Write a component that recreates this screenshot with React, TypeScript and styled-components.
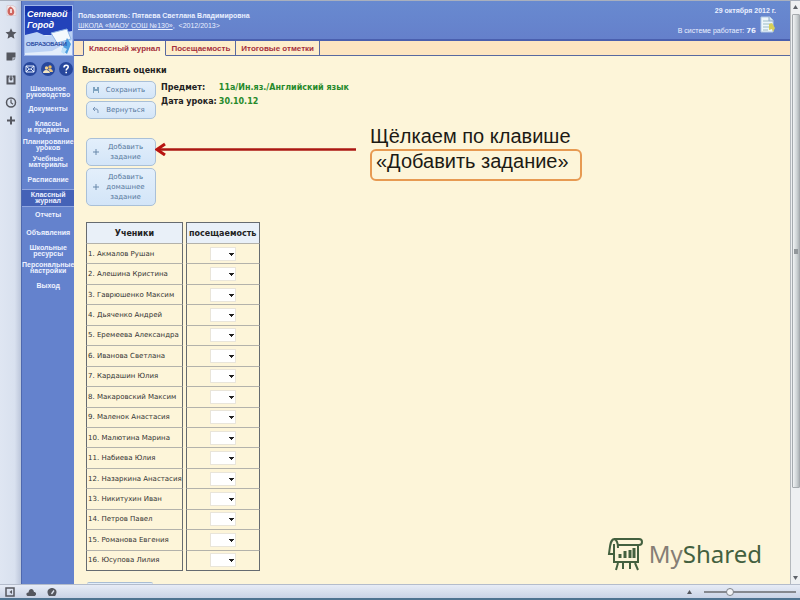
import React from "react";
import styled, { createGlobalStyle, css } from "styled-components";

const verdana = `"DejaVu Sans", Verdana, sans-serif`;
const arial = `"Liberation Sans", Arial, sans-serif`;

const GlobalStyle = createGlobalStyle`
  *, *::before, *::after { box-sizing: border-box; }
  body { margin: 0; font-family: ${arial}; background: #fdf5d9; }
  button, select { font: inherit; }
`;

const Screen = styled.div`
  display: flex;
  flex-direction: column;
  min-height: 100vh;
  border-top: 1px solid #a9b0bd;
`;

const Workspace = styled.div`
  display: grid;
  grid-template-columns: 21px 53px minmax(0, 1fr) 10px;
  flex: 1;
`;

const ToolRail = styled.aside`
  display: flex;
  flex-direction: column;
  align-items: center;
  gap: 10px;
  padding-top: 3px;
  background: linear-gradient(90deg, #dfe6f2, #d9e1ef 70%, #bcc6da);
`;

const IconButton = styled.button`
  display: flex;
  align-items: center;
  justify-content: center;
  padding: 0;
  border: 0;
  background: none;
  color: #55575f;
`;

const RailButton = styled(IconButton)`
  &:last-child { margin-top: -5px; }
`;

const Sidebar = styled.nav`
  display: flex;
  flex-direction: column;
  align-items: center;
  padding-top: 4px;
  background: #6482cd;
  border-left: 1px solid #4e68ae;
`;

const LogoLink = styled.a`
  display: block;
  height: 51px;
`;

const QuickRow = styled.div`
  display: flex;
  gap: 4px;
  margin: 6px 0 7px;
`;

const RoundButton = styled(IconButton)`
  width: 14px;
  height: 14px;
  border-radius: 50%;
  background: #27479c;
  color: #fff;
`;

const NavList = styled.ul`
  display: grid;
  grid-auto-rows: 1fr;
  width: 100%;
  height: 212px;
  margin: 0;
  padding: 0;
  list-style: none;
`;

const NavLink = styled.a<{ $active?: boolean }>`
  display: flex;
  align-items: center;
  justify-content: center;
  height: 100%;
  padding-right: 2px;
  color: #eef2ff;
  font-size: 7px;
  font-weight: bold;
  line-height: 6px;
  text-align: center;
  text-decoration: none;
  white-space: pre;
  ${(p) =>
    p.$active &&
    css`
      background: #4562b7;
      border: solid #90a6e0;
      border-width: 1px 0;
    `}
`;

const Page = styled.div`
  display: flex;
  flex-direction: column;
  min-width: 0;
  background: #fdf5d9;
`;

const Header = styled.header`
  display: flex;
  justify-content: space-between;
  height: 40px;
  padding: 5px 14px 0 4px;
  background: linear-gradient(#688ad0, #6580cb);
  border-bottom: 2px solid #4a5fae;
  color: #eaf0ff;
  font-size: 7px;
  line-height: 10px;
`;

const UserInfo = styled.div`
  padding-top: 5px;
  white-space: nowrap;

  a { color: inherit; }
`;

const UserName = styled.div`
  font-weight: bold;
`;

const Session = styled.div`
  display: grid;
  grid-template-columns: auto 16px;
  column-gap: 4px;
  align-content: start;
  text-align: right;
`;

const SessionDate = styled.div`
  grid-column: 1 / -1;
  font-weight: bold;
`;

const Online = styled.div`
  padding-top: 10px;

  b { font: bold 7px ${verdana}; }
`;

const Tabs = styled.div`
  display: flex;
  height: 15px;
  padding-left: 9px;
  background: linear-gradient(#5869a0, #5869a0) bottom / 100% 1px no-repeat #fde5c0;
`;

const Tab = styled.button<{ $active?: boolean }>`
  padding: 0 5px;
  border: solid #5869a0;
  border-width: 0 1px 1px 0;
  background: #fdedcb;
  color: #a5303d;
  font-size: 8px;
  font-weight: bold;
  line-height: 13px;
  white-space: nowrap;
  ${(p) =>
    p.$active &&
    css`
      border-left-width: 1px;
      border-bottom-color: #fdf5d9;
      background: #fdf5d9;
    `}
`;

const Main = styled.main`
  position: relative;
  flex: 1;
  padding: 10px 8px 0;
  font-family: ${verdana};
`;

const Title = styled.h1`
  margin: 0 0 5px;
  color: #222;
  font-size: 8px;
  line-height: 10px;
`;

const LessonRow = styled.div`
  display: flex;
  align-items: flex-start;
  gap: 5px;
  padding-left: 4px;
`;

const ButtonColumn = styled.div`
  display: flex;
  flex-direction: column;
  gap: 2px;
  width: 70px;
`;

const TaskColumn = styled(ButtonColumn)`
  margin: 19px 0 16px 4px;
`;

const ActionButton = styled.button`
  display: grid;
  grid-template-columns: 8px 1fr;
  align-items: center;
  gap: 2px;
  min-height: 18px;
  padding: 3px 6px 3px 5px;
  border: 1px solid #a9c0d8;
  border-radius: 5px;
  background: linear-gradient(#e3effb, #d3e5f8);
  color: #56789d;
  font-family: ${verdana};
  font-size: 7px;
  line-height: 10px;
`;

const Details = styled.dl`
  display: grid;
  grid-template-columns: auto auto;
  column-gap: 2px;
  margin: 0;
  font-size: 8px;
  font-weight: bold;
  line-height: 14px;

  dt { color: #222; }
  dd { margin: 0; color: #268a2b; }
`;

const Roster = styled.table`
  height: 349px;
  margin-left: 1px;
  border-collapse: separate;
  border-spacing: 3px 0;
  color: #333;
  font-size: 7px;

  th, td {
    padding: 0;
    border: solid #666b70;
    border-width: 0 1px;
    border-bottom: 1px solid #b3b2ab;
  }
  th {
    height: 22px;
    border-top-width: 1px;
    background: #e9f0f8;
    color: #222;
    font-size: 8px;
  }
  th:last-child { min-width: 74px; }
  td:first-child {
    padding-left: 1px;
    white-space: nowrap;
  }
  td:last-child {
    text-align: center;
  }
  tbody tr:last-child td {
    border-bottom-color: #666b70;
  }
`;

const MarkSelect = styled.select`
  appearance: none;
  display: block;
  width: 26px;
  height: 14px;
  margin: 0 auto;
  border: 1px solid #e9e5da;
  border-radius: 0;
  background: linear-gradient(#222, #222) 18px 5px / 5px 1px no-repeat,
    linear-gradient(#222, #222) 19px 6px / 3px 1px no-repeat,
    linear-gradient(#222, #222) 20px 7px / 1px 1px no-repeat, #fff;
`;

const NextButtonEdge = styled.div`
  width: 66px;
  height: 2px;
  margin: 11px 0 0 5px;
  border-top: 1px solid #a9bdd3;
  border-radius: 3px 3px 0 0;
  background: #e3eefa;
`;

const Callout = styled.div`
  position: absolute;
  top: 67px;
  left: 81px;
  display: flex;
  align-items: flex-start;
  color: #1c1a14;
  font-family: ${arial};
  font-size: 20px;
  line-height: 26px;
  white-space: nowrap;

  svg { margin-top: 19px; }
  p { margin: 0 0 0 14px; }
`;

const Highlight = styled.span`
  display: block;
  width: 212px;
  height: 32px;
  padding-left: 4px;
  border: 2px solid #e79a52;
  border-radius: 6px;
  line-height: 20px;
`;

const Watermark = styled.div`
  position: absolute;
  right: 28px;
  bottom: 12px;
  display: flex;
  align-items: center;
  gap: 6px;
  color: #43603f;
  font-family: "Noto Sans", sans-serif;
  font-size: 24px;
  line-height: 36px;

  span span { color: #857d75; }
`;

const ScrollTrack = styled.div`
  display: flex;
  flex-direction: column;
  align-items: center;
  justify-content: space-between;
  padding: 4px 0;
  border-left: 1px solid #b5b9bd;
  background: #eef0f2;
  color: #5e6269;
`;

const ScrollThumb = styled.div`
  flex: 1;
  display: flex;
  align-items: center;
  justify-content: center;
  width: 8px;
  margin: 5px 0 88px;
  border: 1px solid #a6abaf;
  border-radius: 1px;
  background: linear-gradient(90deg, #f1f3f4, #cfd4d6 60%, #b1b7ba);
`;

const Grip = styled.span`
  width: 4px;
  height: 5px;
  background: #92979b;
`;

const StatusBar = styled.footer`
  display: flex;
  align-items: center;
  height: 14px;
  padding: 0 4px 0 5px;
  border-top: 1px solid #b4bccb;
  background: linear-gradient(#e7ecf6, #cad3e6);
`;

const StatusTools = styled.div`
  display: flex;
  gap: 11px;
  flex: 1;
`;

const Zoom = styled.input`
  appearance: none;
  width: 92px;
  height: 8px;
  margin: 0 0 0 12px;
  background: linear-gradient(#85888f, #85888f) center / 100% 2px no-repeat;

  &::-webkit-slider-thumb {
    appearance: none;
    width: 8px;
    height: 8px;
    border: 1px solid #7d8188;
    border-radius: 50%;
    background: #f3f4f7;
  }
`;

const Desktop = styled.div`
  height: 3px;
  background: #4f7391;
`;

const navItems = [
  "Школьное\nруководство", "Документы", "Классы\nи предметы", "Планирование\nуроков",
  "Учебные\nматериалы", "Расписание", "Классный\nжурнал", "Отчеты", "Объявления",
  "Школьные\nресурсы", "Персональные\nнастройки", "Выход",
];

const students = [
  "Акмалов Рушан", "Алешина Кристина", "Гаврюшенко Максим", "Дьяченко Андрей",
  "Еремеева Александра", "Иванова Светлана", "Кардашин Юлия", "Макаровский Максим",
  "Маленок Анастасия", "Малютина Марина", "Набиева Юлия", "Назаркина Анастасия",
  "Никитухин Иван", "Петров Павел", "Романова Евгения", "Юсупова Лилия",
];

const railTools = [
  { label: "Opera", art: <><path d="M2 1h6l3 2v8H2z" fill="#f3e9ea" stroke="#d3bcc2" strokeWidth=".6" /><path d="M5.500 2C1 4 2 11 6 11s5-6-.5-9z" fill="#cf655e" /><path d="M6 4.500v4" stroke="#fff" strokeWidth="1.500" /></> },
  { label: "Закладки", art: <path d="M6 .7l1.600 3.600 3.900.4-2.900 2.600.8 3.900L6 9.200l-3.400 2 .8-3.900L.5 4.700l3.900-.4z" fill="currentColor" /> },
  { label: "Заметки", art: <path d="M1.500 2h9v5h-3v3h-6zM8.500 8h2l-2 2z" fill="currentColor" /> },
  { label: "Загрузки", art: <><path d="M1.500 2h3v2h-1v5h5V4h-1V2h3v9h-9z" fill="currentColor" /><path d="M5.200 2h1.600v3H8L6 7.500 4 5h1.200z" fill="currentColor" /></> },
  { label: "История", art: <><circle cx="6" cy="6" r="4.500" fill="none" stroke="currentColor" strokeWidth="1.500" /><path d="M6 3v3.300l2 1.500" fill="none" stroke="currentColor" strokeWidth="1.200" /></> },
  { label: "Добавить панель", art: <path d="M6 2v8M2 6h8" stroke="currentColor" strokeWidth="2" /> },
];

const Brand = () => (
  <svg width="49" height="51" viewBox="0 0 49 51" role="img" aria-label="Сетевой Город Образование">
    <rect width="49" height="51" fill="#9fb6ea" />
    <rect x="1" y="1" width="47" height="29" fill="#2343ba" />
    <path d="M1 1h47v5L20 14 1 10z" fill="#1632a8" />
    <path d="M1 30h47v20H1z" fill="#e3edfb" />
    <path d="M1 30l12-3 9 4 26-5v9L28 46 1 48z" fill="#bcd2f5" />
    <path d="M27 28l16-4 4 10-14 4z" fill="#f4f9fd" stroke="#90b5e5" />
    <path d="M43 33l4 6-4 10-5-4z" fill="#4c9de0" />
    <path d="M39 42l4 2-3 5-3-2z" fill="#bde1fa" />
    <text x="3" y="12" fill="#fff" fontFamily="Liberation Sans" fontSize="9" fontWeight="bold" fontStyle="italic">Сетевой</text>
    <text x="3" y="23" fill="#fff" fontFamily="Liberation Sans" fontSize="9" fontWeight="bold" fontStyle="italic">Город</text>
    <text x="2" y="41" fill="#2849a1" stroke="#2849a1" strokeWidth=".2" fontFamily="Liberation Sans" fontSize="6">ОБРАЗОВАНИ</text>
  </svg>
);

const Plus = () => (
  <svg width="8" height="8" viewBox="0 0 8 8"><path d="M4 1v6M1 4h6" stroke="#6888aa" /></svg>
);

export default function App() {
  return (
    <>
      <GlobalStyle />
      <Screen>
        <Workspace>
          <ToolRail>
            {railTools.map((t) => (
              <RailButton key={t.label} aria-label={t.label}>
                <svg width="12" height="13" viewBox="0 0 12 12">{t.art}</svg>
              </RailButton>
            ))}
          </ToolRail>

          <Sidebar>
            <LogoLink href="#"><Brand /></LogoLink>
            <QuickRow>
              <RoundButton aria-label="Почта">
                <svg width="10" height="8" viewBox="0 0 10 8"><path d="M1 1h8v6H1zM1 1l4 3.500L9 1M1 7l3-3M9 7L6 4" fill="none" stroke="#e8f0ff" /></svg>
              </RoundButton>
              <RoundButton aria-label="Пользователи">
                <svg width="10" height="8" viewBox="0 0 10 8"><circle cx="3.500" cy="3" r="1.700" fill="#f3d28b" /><path d="M0 8c0-4 6-4 7 0z" fill="#f3e6c1" /><circle cx="7" cy="2" r="1.700" fill="#e9b95f" /><path d="M5 4c2-1 5 0 5 3H7z" fill="#e7c481" /></svg>
              </RoundButton>
              <RoundButton aria-label="Справка">
                <svg width="10" height="10" viewBox="0 0 10 10"><path d="M3 3.500C3 .5 7.500.5 7.200 3.200 7 4.800 5.200 4.600 5.200 6.500M5.200 7.700v1.500" fill="none" stroke="#fff" strokeWidth="1.600" /></svg>
              </RoundButton>
            </QuickRow>
            <NavList>
              {navItems.map((item, i) => (
                <li key={item}><NavLink href="#" $active={i === 6}>{item}</NavLink></li>
              ))}
            </NavList>
          </Sidebar>

          <Page>
            <Header>
              <UserInfo>
                <UserName>Пользователь: Пятаева Светлана Владимировна</UserName>
                <a href="#">ШКОЛА «МАОУ СОШ №130»</a>,&nbsp; &lt;2012/2013&gt;
              </UserInfo>
              <Session>
                <SessionDate>29 октября 2012 г.</SessionDate>
                <Online>В системе работает: <b>76</b></Online>
                <svg width="16" height="18" viewBox="0 0 16 18">
                  <path d="M1 1h9l3 3v12H1z" fill="#eef6fb" stroke="#b4cbe4" />
                  <path d="M3 5h6M3 8h8M3 11h7M3 14h5" stroke="#9bbcc6" />
                  <path d="M9 1v4h4" fill="#cfe0ee" stroke="#91abc8" />
                  <path d="M9 8l3-1 3 5-2 4-1-3-3 1z" fill="#d7cf59" />
                </svg>
              </Session>
            </Header>
            <Tabs role="tablist">
              <Tab role="tab" aria-selected="true" $active>Классный журнал</Tab>
              <Tab role="tab" aria-selected="false">Посещаемость</Tab>
              <Tab role="tab" aria-selected="false">Итоговые отметки</Tab>
            </Tabs>
            <Main>
              <Title>Выставить оценки</Title>
              <LessonRow>
                <ButtonColumn>
                  <ActionButton>
                    <svg width="8" height="8" viewBox="0 0 8 8"><path d="M1 1h6v6H1z" fill="#7ea3c0" /><path d="M3 1h2v2H3zM2 5h4v2H2z" fill="#dcebf7" /></svg>
                    Сохранить
                  </ActionButton>
                  <ActionButton>
                    <svg width="8" height="8" viewBox="0 0 8 8"><path d="M3 1L1 3l2 2M1 3h3c2 0 2 1 2 4" fill="none" stroke="#7793b5" /></svg>
                    Вернуться
                  </ActionButton>
                </ButtonColumn>
                <Details>
                  <dt>Предмет:</dt><dd>11а/Ин.яз./Английский язык</dd>
                  <dt>Дата урока:</dt><dd>30.10.12</dd>
                </Details>
              </LessonRow>
              <TaskColumn>
                <ActionButton><Plus />Добавить задание</ActionButton>
                <ActionButton><Plus />Добавить домашнее задание</ActionButton>
              </TaskColumn>
              <Roster>
                <thead>
                  <tr><th scope="col">Ученики</th><th scope="col">посещаемость</th></tr>
                </thead>
                <tbody>
                  {students.map((name, i) => (
                    <tr key={name}>
                      <td id={`student-${i}`}>{i + 1}. {name}</td>
                      <td><MarkSelect aria-labelledby={`student-${i}`}><option /></MarkSelect></td>
                    </tr>
                  ))}
                </tbody>
              </Roster>
              <NextButtonEdge />
              <Callout>
                <svg width="201" height="14" viewBox="0 0 201 14">
                  <path d="M3 7.500h198" stroke="#ab1712" strokeWidth="2.500" />
                  <path d="M10 2L2 7.500 10 13" fill="none" stroke="#b81410" strokeWidth="3" />
                </svg>
                <p>Щёлкаем по клавише<Highlight>«Добавить задание»</Highlight></p>
              </Callout>
              <Watermark>
                <svg width="36" height="34" viewBox="0 0 36 34" fill="none" stroke="#43603f" strokeWidth="2">
                  <path d="M7 2h25c4 0 4 6 0 6H11M7 2C3 3 3 10 2 17h5M7 2c4 1 4 6 4 9M7 7v18h24V8" />
                  <path d="M11 26l-2 7M16 26v6M23 26v6M28 26l3 7" />
                  <path d="M13 21v-4M18 21v-7M23 21v-8M27 21V11" strokeWidth="3" />
                </svg>
                <span><span>My</span>Shared</span>
              </Watermark>
            </Main>
          </Page>

          <ScrollTrack>
            <svg width="5" height="4" viewBox="0 0 5 4"><path d="M0 4l2.500-4L5 4z" fill="currentColor" /></svg>
            <ScrollThumb><Grip /></ScrollThumb>
            <svg width="5" height="4" viewBox="0 0 5 4"><path d="M0 0h5L2.500 4z" fill="currentColor" /></svg>
          </ScrollTrack>
        </Workspace>

        <StatusBar>
          <StatusTools>
            <IconButton aria-label="Панели"><svg width="10" height="10" viewBox="0 0 10 10"><path d="M1 1h8v8H1z" fill="none" stroke="currentColor" strokeWidth="1.500" /><path d="M7 3v4L4.500 5z" fill="currentColor" /></svg></IconButton>
            <IconButton aria-label="Облако"><svg width="10" height="10" viewBox="0 0 10 10"><path d="M2.500 9C-.5 9 0 5 2.500 5.500 3 1 7.500 1 8 5c3 0 2.500 4 0 4z" fill="currentColor" /></svg></IconButton>
            <IconButton aria-label="Турбо"><svg width="10" height="10" viewBox="0 0 10 10"><path d="M2 9C-2 3 3 1 5 1s7 2 3 8z" fill="currentColor" /><path d="M4.500 7L7 3.500" stroke="#e0e6f1" strokeWidth="1.300" /></svg></IconButton>
          </StatusTools>
          <IconButton aria-label="Масштаб"><svg width="5" height="4" viewBox="0 0 5 4"><path d="M0 4l2.500-4L5 4z" fill="currentColor" /></svg></IconButton>
          <Zoom type="range" min={0} max={100} defaultValue={26} aria-label="Масштаб страницы" />
        </StatusBar>
        <Desktop />
      </Screen>
    </>
  );
}
